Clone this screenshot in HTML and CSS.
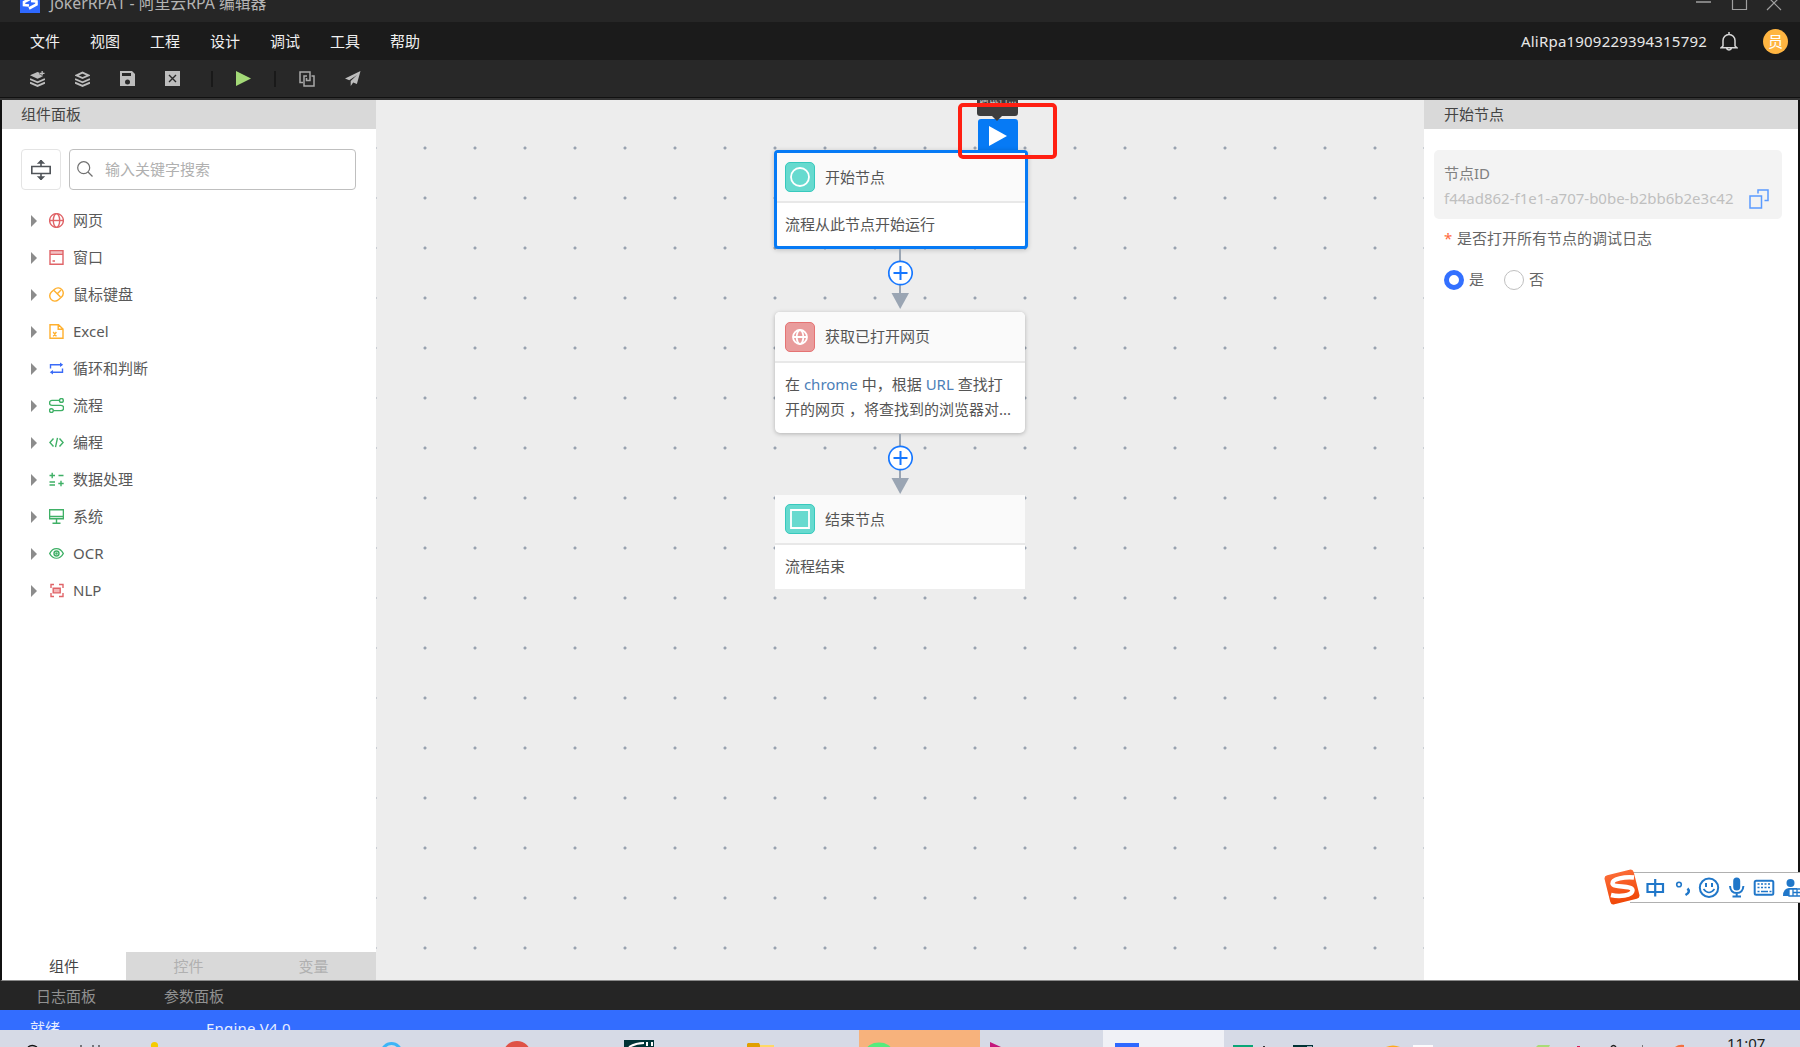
FILE: index.html
```
<!DOCTYPE html>
<html lang="zh-CN">
<head>
    <meta charset="UTF-8">
    <title>JokerRPA1 - 阿里云RPA 编辑器</title>
    <link rel="stylesheet" href="styles.css">
</head>
<body>
    <div class="app">
        <header class="titlebar">
            <svg class="logo" width="20" height="20" viewBox="0 0 20 20"><rect width="20" height="20" fill="#2e68ff"/><path d="M11 5.500 4 9v3l5 .500M9 15.500l7.500-4V8.500L11 8" fill="none" stroke="#fff" stroke-width="2.600"/></svg>
            <span class="app-title">JokerRPA1 - 阿里云RPA 编辑器</span>
            <svg class="window-btns" width="88" height="14" viewBox="0 0 88 14" fill="none" stroke="#a0a0a0" stroke-width="1.200"><path d="M0 2h15" stroke-width="1.500"/><path d="M36.500-4v13.500h14V-4"/><path d="M71-4 85 10M85-4 71 10"/></svg>
        </header>

        <nav class="menubar">
            <span>文件</span><span>视图</span><span>工程</span><span>设计</span><span>调试</span><span>工具</span><span>帮助</span>
            <div class="user">
                <span class="user-name">AliRpa1909229394315792</span>
                <svg width="18" height="19" viewBox="0 0 18 19" fill="none" stroke="#d8d8d8" stroke-width="1.500"><path d="M9 0v2M3 14V8.500a6 6 0 0 1 12 0V14l2 1.800H1L3 14zM6.500 16c.5 2.500 4.500 2.500 5 0"/></svg>
                <span class="avatar">员</span>
            </div>
        </nav>

        <div class="toolbar">
            <svg width="15" height="16" viewBox="0 0 15 16" fill="#bdbdbd"><path d="M0 4.200 7.500 1l2 .8v1.700h2V5.200h1.800L7.500 7.700z"/><path d="M11.500 0h1.300v1.700h1.700V3h-1.700v1.600h-1.300V3H9.900V1.700h1.600z"/><path d="M0 8l7.500 3.300L15 8M0 11.600l7.500 3.300 7.500-3.300" fill="none" stroke="#bdbdbd" stroke-width="1.900"/></svg>
            <svg width="15" height="16" viewBox="0 0 15 16" fill="none" stroke="#bdbdbd" stroke-width="1.900"><path d="M1.500 4.300l6-2.700 6 2.700-6 2.700z"/><path d="M0 8l7.500 3.300L15 8M0 11.600l7.500 3.300 7.500-3.300"/></svg>
            <svg width="15" height="15" viewBox="0 0 15 15"><path d="M0 0h12l3 3v12H0z" fill="#bdbdbd"/><path d="M2 2h9v3H2z" fill="#282828"/><circle cx="7.500" cy="11" r="2.500" fill="#282828"/></svg>
            <svg width="15" height="15" viewBox="0 0 15 15"><path d="M0 0h15v15H0z" fill="#bdbdbd"/><path d="M4 4l7 7M11 4l-7 7" stroke="#282828" stroke-width="1.400"/></svg>
            <i class="divider"></i>
            <svg width="15" height="15" viewBox="0 0 15 15"><path d="M0 0l15 7.500L0 15z" fill="#a3d977"/></svg>
            <i class="divider divider-last"></i>
            <svg width="16" height="16" viewBox="0 0 16 16" fill="none" stroke="#a8a8a8" stroke-width="1.500"><path d="M4 11.500H1V1h10v8.500H7.500V7"/><path d="M12.500 5H15v10H5V5h3"/></svg>
            <svg width="16" height="15" viewBox="0 0 16 15" fill="#bdbdbd"><path d="M15.500 0 0 7.500l4.300 1.700L12 4 5.700 10v5l2.500-3.600 3.700 1.700z"/></svg>
        </div>

        <main class="workspace">
            <aside class="left-panel">
                <h2 class="panel-title">组件面板</h2>
                <div class="search-row">
                    <button class="collapse-btn"><svg width="20" height="20" viewBox="0 0 20 20" fill="none" stroke="#505459" stroke-width="1.600"><path d="M.8 6.500h18.400v7H.8zM10 0v6M10 14v6"/><path d="M7.700 3 10 .7 12.300 3zM7.700 17l2.300 2.300L12.300 17z" fill="#505459"/></svg></button>
                    <div class="search-box">
                        <svg width="16" height="16" viewBox="0 0 16 16" fill="none" stroke="#707070" stroke-width="1.200"><circle cx="6.700" cy="6.700" r="6"/><path d="M11 11l4.500 4.500"/></svg>
                        <span>输入关键字搜索</span>
                    </div>
                </div>
                <ul class="tree">
                    <li><i></i><svg viewBox="0 0 15 15" stroke="#e06468"><circle cx="7.500" cy="7.500" r="6.900"/><ellipse cx="7.500" cy="7.500" rx="3.200" ry="6.900"/><path d="M.5 7.500h14"/></svg>网页</li>
                    <li><i></i><svg viewBox="0 0 15 15" stroke="#e06468"><path d="M1 .8h13v13.400H1zM1 4.300h13M3.500 11h2.500"/><path d="M1 2.500h13" stroke-opacity=".4"/></svg>窗口</li>
                    <li><i></i><svg viewBox="0 0 15 15" stroke="#ffb02e"><rect x="-5.200" y="-7.300" width="10.400" height="14.600" rx="5.200" transform="translate(7.500 7.500) rotate(48)"/><path d="M5 3.500 11.500 10M8.300 6.700 12 3"/></svg>鼠标键盘</li>
                    <li><i></i><svg viewBox="0 0 15 15" stroke="#ffb02e"><path d="M1 .7h8.500L14 5v9.300H1zM9.200 1v4.200H14M4.200 8l3.200 4.300M7.400 8l-3.200 4.300"/></svg>Excel</li>
                    <li><i></i><svg viewBox="0 0 15 15" stroke="#3a6bf7"><path d="M1.500 7.500V3.800H13M13.500 7.500v3.700H2"/><path d="M11 1.500 14.200 3.800 11 6zM4 9 .8 11.200 4 13.500z" fill="#3a6bf7" stroke="none"/></svg>循环和判断</li>
                    <li><i></i><svg viewBox="0 0 15 15" stroke="#3fb066"><circle cx="12.400" cy="2.400" r="1.900"/><circle cx="2.400" cy="12.600" r="1.900"/><path d="M10.500 2.400H3a2.500 2.500 0 0 0 0 5h9a2.600 2.600 0 0 1 0 5.200H4.500"/></svg>流程</li>
                    <li><i></i><svg viewBox="0 0 15 15" stroke="#3fb066"><path d="M4.500 3.500.9 7.500l3.600 4M10.500 3.500l3.600 4-3.600 4M8.500 2.800l-2 9.400"/></svg>编程</li>
                    <li><i></i><svg viewBox="0 0 15 15" stroke="#3fb066"><path d="M.5 3.500H6M3.200.8v5.400M9.500 3.500h5M.5 10H6M.5 13H6M9.300 11.500h5.400M12 8.800v5.400"/></svg>数据处理</li>
                    <li><i></i><svg viewBox="0 0 15 15" stroke="#3fb066"><path d="M.6.700h13.800v9.100H.6zM.6 7.500h13.800M7.500 10v4.300M3.500 14.300h8"/></svg>系统</li>
                    <li><i></i><svg viewBox="0 0 15 15" stroke="#3fb066"><path d="M.7 7.500C4-.1 11 .1 14.300 7.500 11 14.900 4 15.100.7 7.500z" transform="translate(0 1.100) scale(1 .85)"/><circle cx="7.500" cy="7.500" r="2.500"/><circle cx="7.500" cy="7.500" r=".6"/></svg>OCR</li>
                    <li><i></i><svg viewBox="0 0 15 15" stroke="#e06468"><path d="M2 5V1.500h3M10 1.500h4V5M2 10v3.500h3M10 13.500h4V10"/><path d="M4.200 5.300h7v4.600h-7z" fill="#f3b6b8"/></svg>NLP</li>
                </ul>
                <div class="tabs"><span class="active">组件</span><span>控件</span><span>变量</span></div>
            </aside>

            <section class="canvas">
                <div class="tooltip">调试行…</div>
                <div class="run-tag"><svg width="18" height="20" viewBox="0 0 18 20"><path d="M0 0l18 10L0 20z" fill="#fff"/></svg></div>

                <div class="node node-start">
                    <div class="node-head"><span class="badge teal"><svg width="20" height="20" viewBox="0 0 20 20"><circle cx="10" cy="10" r="9"/></svg></span>开始节点</div>
                    <div class="node-body">流程从此节点开始运行</div>
                </div>
                <svg class="link link-1" width="26" height="61" viewBox="0 0 26 61"><path d="M13 0v46" stroke="#9aa5b3" stroke-width="2"/><path d="M4.500 44h17.500L13.200 60z" fill="#9aa5b3"/><circle cx="13.500" cy="24" r="11.700"/><path class="plus" d="M6.500 24h14M13.500 17v14"/></svg>

                <div class="node node-page">
                    <div class="node-head"><span class="badge red"><svg width="16" height="16" viewBox="0 0 16 16"><circle cx="8" cy="8" r="7"/><ellipse cx="8" cy="8" rx="3.300" ry="7"/><path d="M1 8h14"/></svg></span>获取已打开网页</div>
                    <div class="node-body">在 <b>chrome</b> 中，根据 <b>URL</b> 查找打<br>开的网页 ，将查找到的浏览器对...</div>
                </div>
                <svg class="link link-2" width="26" height="61" viewBox="0 0 26 61"><path d="M13 0v46" stroke="#9aa5b3" stroke-width="2"/><path d="M4.500 44h17.500L13.200 60z" fill="#9aa5b3"/><circle cx="13.500" cy="24" r="11.700"/><path class="plus" d="M6.500 24h14M13.500 17v14"/></svg>

                <div class="node node-end">
                    <div class="node-head"><span class="badge teal"><svg width="20" height="20" viewBox="0 0 20 20"><path d="M1 1h18v18H1z"/></svg></span>结束节点</div>
                    <div class="node-body">流程结束</div>
                </div>
                <div class="highlight"></div>
            </section>

            <aside class="right-panel">
                <h2 class="panel-title">开始节点</h2>
                <div class="id-card">
                    <div class="id-label">节点ID</div>
                    <div class="id-value"><span>f44ad862-f1e1-a707-b0be-b2bb6b2e3c42</span>
                        <svg width="20" height="20" viewBox="0 0 20 20" fill="none" stroke="#5b9bff" stroke-width="1.500"><path d="M1 7h11.500v12H1zM9 4.500V1h10v10.500h-3.500"/></svg>
                    </div>
                </div>
                <div class="field-label"><em>*</em>是否打开所有节点的调试日志</div>
                <div class="radios"><span class="radio checked"></span><label>是</label><span class="radio"></span><label>否</label></div>
            </aside>
        </main>

        <div class="dock"><span>日志面板</span><span>参数面板</span></div>
        <footer class="status"><span>就绪</span><span class="engine">Engine V4.0</span></footer>

        <div class="taskbar">
            <svg width="1800" height="17" viewBox="0 0 1800 17">
                <path d="M28 17q4-3 9 0" fill="none" stroke="#111" stroke-width="1.300"/>
                <path d="M81 15v2M93 15v2M99 15v2" stroke="#111"/>
                <circle cx="154.500" cy="15.500" r="3.600" fill="#f5cc00"/>
                <circle cx="391.500" cy="23" r="9.500" fill="none" stroke="#3db5f7" stroke-width="3"/>
                <circle cx="517" cy="25" r="14" fill="#df5246"/>
                <path d="M624 10h30v7h-30z" fill="#003336"/><path d="M629 17q7-4 15-4M647 12v4M652 12v4" fill="none" stroke="#fff" stroke-width="2"/>
                <path d="M747 17v-3l1-1h11l1 2v2z" fill="#e0a000"/><path d="M760 15h14v2h-14z" fill="#ffd967"/>
                <path d="M859 0h121v17H859z" fill="#f7b27c"/><ellipse cx="879" cy="21" rx="13" ry="8.500" fill="#55ec7d"/>
                <path d="M990 17v-5l11 5z" fill="#c4187c"/>
                <path d="M1103 0h121v17h-121z" fill="#f0f1f6"/><path d="M1115 13h24v4h-24z" fill="#2e68ff"/>
                <path d="M1233 15h20v2h-20z" fill="#0aa678"/><path d="M1263 16h2v1h-2z" fill="#333"/><path d="M1293 15h20v2h-20z" fill="#003336"/><path d="M1307 16h5v1h-5z" fill="#9ab"/>
                <path d="M1386 17q7-3 14 0z" fill="#ffab1a"/><path d="M1413 15h20v2h-20z" fill="#fbfbfd"/>
                <path d="M1536 17l2-2h12l-1 2z" fill="#a9dc78"/><path d="M1577 16h3v1h-3z" fill="#d81e5b"/>
                <path d="M1611 17q2.500-3 5 0" fill="none" stroke="#222" stroke-width="1.300"/><path d="M1642 15h1v2h-1z" fill="#777"/><path d="M1675 17q4-3 9-2v2z" fill="#f2703f"/>
            </svg>
            <span class="clock">11:07</span>
        </div>

        <div class="ime">
            <svg class="ime-logo" width="36" height="36" viewBox="0 0 36 36"><defs><linearGradient id="sg" x2="0" y2="1"><stop stop-color="#fb6a35"/><stop offset="1" stop-color="#f04708"/></linearGradient></defs><rect x="3" y="3" width="30" height="30" rx="3.500" fill="url(#sg)" transform="rotate(-14 18 18)"/><path d="M30 8.500C21 7.500 8 10 8.500 14.500S29 16 28.500 21.500 15 28 7 26" fill="none" stroke="#fff" stroke-width="4.500"/></svg>
            <div class="ime-bar">
                <svg width="155" height="26" viewBox="0 0 155 26" fill="none" stroke="#2077c9" stroke-width="2.200">
                    <path d="M2.500 9h15.500v8H2.500zM10.200 4v17.500"/>
                    <circle cx="34" cy="9.500" r="2.300" stroke-width="1.600"/><path d="M42.500 13.500q3.500 3.500-2 6.500" stroke-width="2.500"/>
                    <circle cx="64" cy="12.800" r="9.200" stroke-width="2"/><path d="M61 8v4M67 8v4" stroke-width="2"/><path d="M58.500 14q5.500 7 11 0" stroke-width="1.600"/>
                    <rect x="88.200" y="2.500" width="7" height="13" rx="3.500" fill="#2077c9" stroke="none"/><path d="M85 11q.5 7 6.700 7t6.700-7M91.700 18v4M87.500 21.500h8.500" stroke-width="2"/>
                    <rect x="109.700" y="5.700" width="18.600" height="14" rx="1.500" stroke-width="2"/><path d="M112.500 9h14M112.500 12.500h14" stroke-dasharray="2 1.500" stroke-width="1.700"/><path d="M112.500 16.500h2M116 16.500h7M124.500 16.500h2" stroke-width="1.700"/>
                    <circle cx="145.500" cy="8" r="4" fill="#2077c9" stroke="none"/><path d="M138 21q0-8 7-8h7v8z" fill="#2077c9" stroke="none"/><path d="M144 14h13v7h-13zM148 14v7M152 14v7M148 17.500h8" fill="#fff" stroke-width="1.300"/>
                </svg>
            </div>
        </div>
    </div>
</body>
</html>
```
FILE: styles.css
```
* {
    box-sizing: border-box;
}
body {
    margin: 0;
    font-family: "Noto Sans", "Noto Sans CJK SC", sans-serif;
    font-size: 15px;
    background: #262626;
    overflow: hidden;
}
.app {
    position: relative;
    width: 1800px;
    height: 1047px;
    display: flex;
    flex-direction: column;
    overflow: hidden;
}
svg {
    display: block;
    flex: none;
}

/* 标题栏 */
.titlebar {
    height: 22px;
    padding: 0 16px 0 20px;
    display: flex;
    align-items: flex-start;
    background: #262626;
    overflow: hidden;
}
.logo {
    margin-top: -7px;
}
.app-title {
    margin: -9px 0 0 10px;
    color: #b4b4b4;
    font-size: 15.800px;
    line-height: 24px;
}
.window-btns {
    margin-left: auto;
}

/* 菜单 */
.menubar {
    height: 38px;
    padding: 0 12px 0 30px;
    display: flex;
    align-items: center;
    gap: 30px;
    background: #1b1b1b;
    color: #f0f0f0;
}
.menubar > span {
    padding-bottom: 2px;
}
.user {
    margin-left: auto;
    display: flex;
    align-items: center;
}
.user svg {
    margin: 0 25px 0 13px;
}
.user-name {
    color: #e8e8e8;
    letter-spacing: .2px;
}
.avatar {
    width: 25px;
    height: 25px;
    border-radius: 50%;
    background: #ffb541;
    color: #fff;
    line-height: 24px;
    text-align: center;
}
.toolbar {
    height: 40px;
    padding: 0 30px 1px;
    display: flex;
    align-items: center;
    gap: 30px;
    background: #282828;
    border-bottom: 2px solid #333;
    box-shadow: inset 0 -1px #111;
}
.divider {
    width: 2px;
    height: 16px;
    margin: 0 -7px 0 1px;
    background: #191919;
}
.divider-last {
    margin: 0 -7px;
}

/* 主体 */
.workspace {
    height: 881px;
    display: flex;
    border: solid #111;
    border-width: 0 2px;
    border-bottom: 1px solid #8a8a8a;
}
.panel-title {
    margin: 0;
    height: 29px;
    padding-left: 19px;
    background: #d9d9d9;
    color: #444;
    font-size: 15px;
    font-weight: normal;
    line-height: 28px;
}
.left-panel {
    width: 374px;
    display: flex;
    flex-direction: column;
    background: #fff;
    color: #595959;
}
.search-row {
    display: flex;
    gap: 8px;
    padding: 20px 20px 12px 19px;
}
.collapse-btn {
    width: 40px;
    height: 41px;
    padding: 0;
    display: flex;
    align-items: center;
    justify-content: center;
    background: #fff;
    border: 1px solid #e4e4e4;
    border-radius: 4px;
}
.search-box {
    flex: 1;
    display: flex;
    align-items: center;
    gap: 12px;
    padding: 0 0 2px 7px;
    border: 1px solid #bfbfbf;
    border-radius: 4px;
    color: #b0b0b0;
}
.tree {
    margin: 0;
    padding: 0;
    list-style: none;
}
.tree li {
    height: 37px;
    padding: 0 0 2px 29px;
    display: flex;
    align-items: center;
}
.tree i {
    margin-top: 2px;
    border-left: 6px solid #8c8c8c;
    border-top: 6px solid transparent;
    border-bottom: 6px solid transparent;
}
.tree svg {
    width: 15px;
    height: 15px;
    margin: 2px 9px 0 12px;
    fill: none;
    stroke-width: 1.400;
}
.tabs {
    height: 28px;
    margin-top: auto;
    display: flex;
    background: #d9d9d9;
}
.tabs span {
    width: 125px;
    line-height: 29px;
    text-align: center;
    color: #b0b0b0;
}
.tabs .active {
    width: 124px;
    background: #fff;
    color: #444;
}

/* 流程画布 */
.canvas {
    position: relative;
    width: 1048px;
    overflow: hidden;
    background: #ededed radial-gradient(circle at 25px 25px, #98a2b0 1px, #ededed 2px) 24px 23px / 50px 50px;
}
.node {
    position: absolute;
    left: 399px;
    width: 250px;
    background: #fff;
    color: #555;
}
.node-head {
    height: 49px;
    padding: 0 0 2px 10px;
    display: flex;
    align-items: center;
    gap: 10px;
    background: #fafafa;
    border-bottom: 2px solid #e8e8e8;
}
.node-body {
    padding: 9px 10px;
    line-height: 25px;
    white-space: nowrap;
}
.node-body b {
    color: #4c80b8;
    font-weight: normal;
}
.node-start {
    top: 50px;
    left: 398px;
    width: 254px;
    height: 99px;
    border: 3px solid #067af5;
    border-radius: 4px;
    box-shadow: 0 1px 5px rgba(0, 0, 0, .2);
}
.node-start .node-head {
    height: 50px;
    padding-left: 8px;
}
.node-start .node-body {
    padding-left: 8px;
}
.node-page {
    top: 212px;
    height: 121px;
    border-radius: 5px;
    overflow: hidden;
    box-shadow: 0 1px 4px rgba(0, 0, 0, .25);
}
.node-page .node-head {
    height: 51px;
}
.node-end {
    top: 395px;
    height: 94px;
}
.node-end .node-head {
    height: 50px;
}
.badge {
    width: 30px;
    height: 30px;
    margin-top: 2px;
    border: 1px solid;
    border-radius: 5px;
    display: flex;
    align-items: center;
    justify-content: center;
}
.badge svg {
    fill: none;
    stroke: #fff;
    stroke-width: 1.800;
}
.teal {
    background: #67dacf;
    border-color: #37c9bd;
}
.red {
    background: #e99c9c;
    border-color: #e57373;
}
.link {
    position: absolute;
    left: 511px;
}
.link-1 {
    top: 149px;
}
.link-2 {
    top: 334px;
}
.link circle {
    fill: #fff;
    stroke: #1677ff;
    stroke-width: 1.700;
}
.plus {
    stroke: #1677ff;
    stroke-width: 2;
}
.run-tag {
    position: absolute;
    left: 602px;
    top: 19px;
    width: 40px;
    height: 32px;
    padding: 7px 0 0 11px;
    background: #067af5;
    border-radius: 3px 3px 0 0;
}
.tooltip {
    position: absolute;
    z-index: 1;
    left: 601px;
    top: -10px;
    width: 41px;
    height: 26px;
    background: #3d3d3d;
    border-radius: 3px;
    color: #ccc;
    font-size: 10px;
    line-height: 19px;
    text-align: center;
    white-space: nowrap;
}
.tooltip::after {
    content: "";
    position: absolute;
    left: 15px;
    top: 26px;
    border: 5px solid transparent;
    border-top-color: #3d3d3d;
}
.highlight {
    position: absolute;
    left: 582px;
    top: 3px;
    width: 99px;
    height: 56px;
    border: 4px solid #ff1f12;
    border-radius: 5px;
    z-index: 2;
}

/* 属性面板 */
.right-panel {
    width: 374px;
    background: #fff;
    color: #666;
}
.right-panel .panel-title {
    padding-left: 20px;
}
.id-card {
    height: 69px;
    margin: 21px 16px 0 10px;
    padding: 11px 10px 0;
    background: #f3f3f3;
    border-radius: 5px;
    line-height: 25px;
}
.id-label {
    color: #808080;
}
.id-value {
    display: flex;
    align-items: center;
    justify-content: space-between;
    padding-right: 3px;
    color: #bfbfbf;
}
.field-label {
    padding: 7px 0 0 20px;
    line-height: 25px;
    display: flex;
}
.field-label em {
    width: 13px;
    color: #ff6a3d;
    font-style: normal;
}
.radios {
    display: flex;
    align-items: center;
    padding: 16px 0 0 20px;
    line-height: 25px;
}
.radio {
    width: 20px;
    height: 20px;
    margin-right: 5px;
    border: 1px solid #bfbfbf;
    border-radius: 50%;
}
.radio.checked {
    border: 5px solid #3370ff;
}
.radios label {
    width: 35px;
}

/* 底部 */
.dock {
    height: 29px;
    padding-left: 36px;
    display: flex;
    gap: 68px;
    background: #252525;
    color: #919191;
    line-height: 31px;
}
.status {
    height: 20px;
    padding-left: 30px;
    display: flex;
    gap: 146px;
    background: #336dff;
    color: #e8eeff;
    line-height: 36px;
    overflow: hidden;
}
.engine {
    letter-spacing: .2px;
}
.taskbar {
    position: relative;
    height: 17px;
    background: #d6dae6;
    overflow: hidden;
}
.clock {
    position: absolute;
    left: 1727px;
    top: 3px;
    color: #1a1a1a;
    font-size: 15px;
    line-height: 20px;
}

/* 输入法悬浮条 */
.ime {
    position: absolute;
    left: 1604px;
    top: 870px;
    width: 196px;
    display: flex;
    align-items: center;
}
.ime-logo {
    position: relative;
    z-index: 1;
    margin-top: -1px;
}
.ime-bar {
    width: 170px;
    height: 31px;
    margin-left: -10px;
    padding: 2px 0 0 15px;
    background: #fff;
    border: solid #b0b0b0;
    border-width: 1px 0;
    overflow: hidden;
}
```
